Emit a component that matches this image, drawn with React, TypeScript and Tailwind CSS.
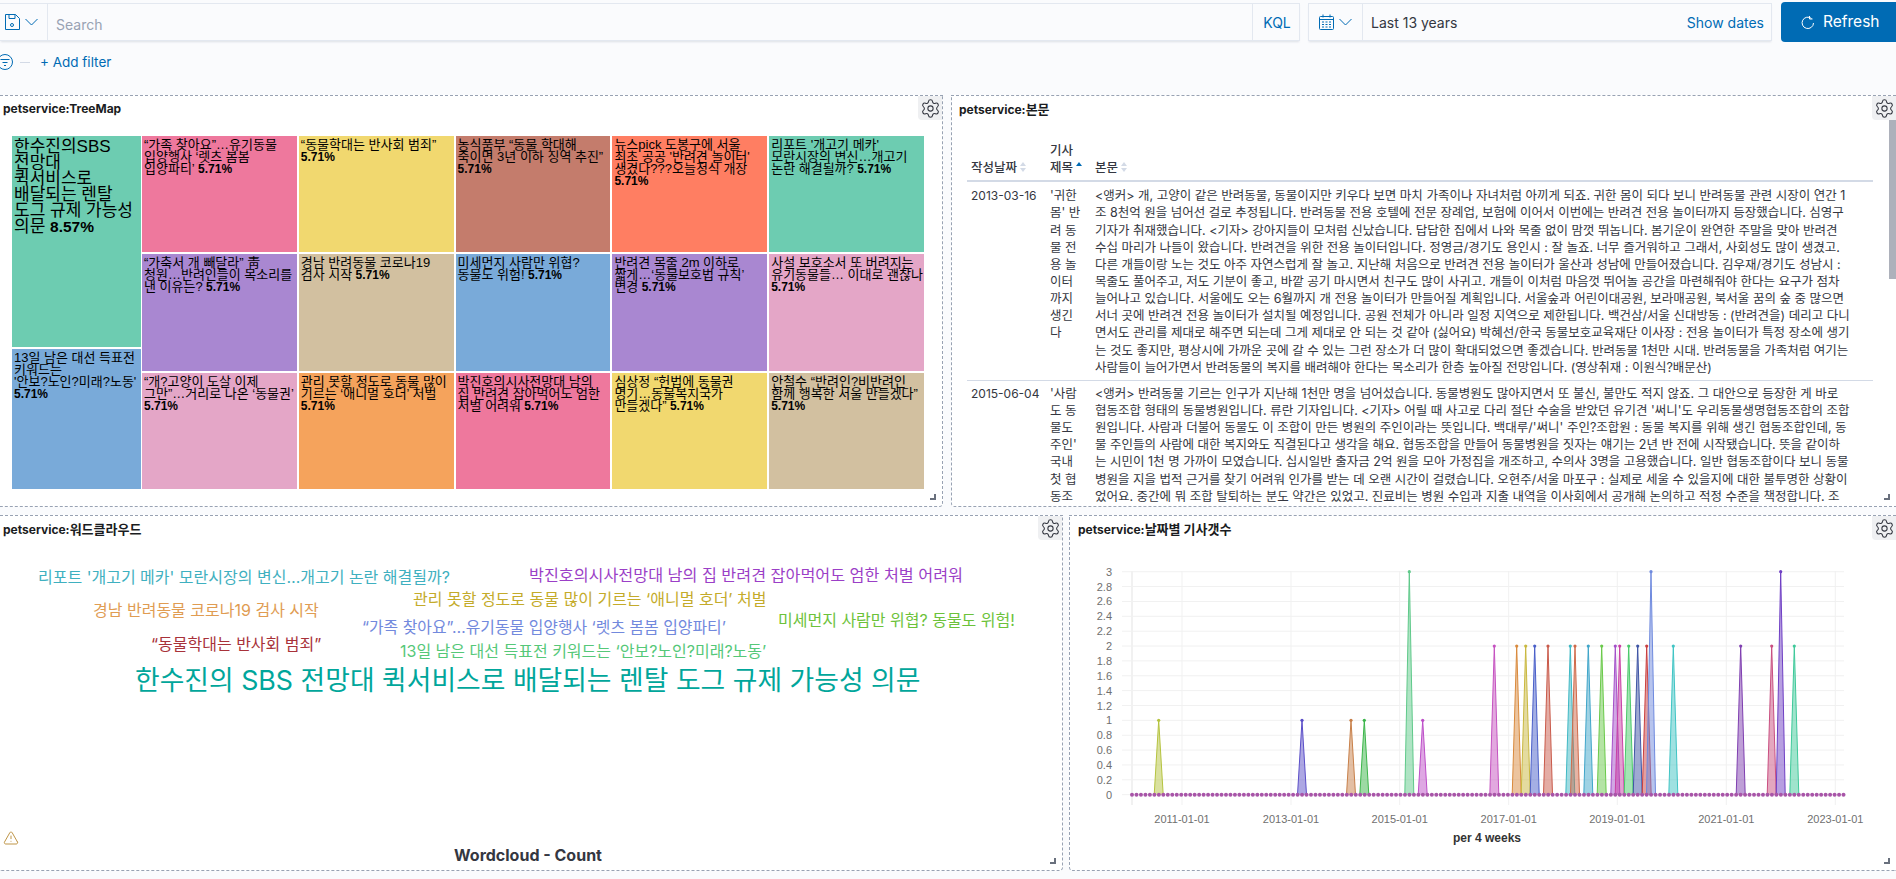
import { Settings, TriangleAlert } from "lucide-react";
import type { ReactNode } from "react";

const sans = "font-['Inter','Noto_Sans_CJK_KR',sans-serif]";

interface Cell {
  bg: string;
  lines: string[];
}

// an empty last line puts the percent on a line of its own
const cells: Cell[] = [
  { bg: "bg-[#EE789D]", lines: ["“가족 찾아요”…유기동물", "입양행사 ‘렛츠 봄봄", "입양파티’"] },
  { bg: "bg-[#F1D86F]", lines: ["“동물학대는 반사회 범죄”", ""] },
  { bg: "bg-[#C47C6C]", lines: ["농식품부 “동물 학대해", "죽이면 3년 이하 징역 추진”", ""] },
  { bg: "bg-[#FF7E62]", lines: ["뉴스pick 도봉구에 서울", "최초 공공 '반려견 놀이터'", "생겼다???오늘정식 개장", ""] },
  { bg: "bg-[#6DCCB1]", lines: ["리포트 '개고기 메카'", "모란시장의 변신…개고기", "논란 해결될까?"] },
  { bg: "bg-[#A987D1]", lines: ["“가축서 개 빼달라” 靑", "청원…반려인들이 목소리를", "낸 이유는?"] },
  { bg: "bg-[#D2C0A0]", lines: ["경남 반려동물 코로나19", "검사 시작"] },
  { bg: "bg-[#79AAD9]", lines: ["미세먼지 사람만 위협?", "동물도 위험!"] },
  { bg: "bg-[#A987D1]", lines: ["반려견 목줄 2m 이하로", "짧게…‘동물보호법 규칙’", "변경"] },
  { bg: "bg-[#E4A6C7]", lines: ["사설 보호소서 또 버려지는", "유기동물들… 이대로 괜찮나", ""] },
  { bg: "bg-[#E4A6C7]", lines: ["“개?고양이 도살 이제", "그만”…거리로 나온 ‘동물권’", ""] },
  { bg: "bg-[#F5A35C]", lines: ["관리 못할 정도로 동물 많이", "기르는 ‘애니멀 호더’ 처벌", ""] },
  { bg: "bg-[#EE789D]", lines: ["박진호의시사전망대 남의", "집 반려견 잡아먹어도 엄한", "처벌 어려워"] },
  { bg: "bg-[#F1D86F]", lines: ["심상정 “헌법에 동물권", "명기…동물복지국가", "만들겠다”"] },
  { bg: "bg-[#D2C0A0]", lines: ["안철수 “반려인?비반려인", "함께 행복한 서울 만들겠다”", ""] },
];

const row1Body = [
  "<앵커> 개, 고양이 같은 반려동물, 동물이지만 키우다 보면 마치 가족이나 자녀처럼 아끼게 되죠. 귀한 몸이 되다 보니 반려동물 관련 시장이 연간 1",
  "조 8천억 원을 넘어선 걸로 추정됩니다. 반려동물 전용 호텔에 전문 장례업, 보험에 이어서 이번에는 반려견 전용 놀이터까지 등장했습니다. 심영구",
  "기자가 취재했습니다. <기자> 강아지들이 모처럼 신났습니다. 답답한 집에서 나와 목줄 없이 맘껏 뛰놉니다. 봄기운이 완연한 주말을 맞아 반려견",
  "수십 마리가 나들이 왔습니다. 반려견을 위한 전용 놀이터입니다. 정영금/경기도 용인시 : 잘 놀죠. 너무 즐거워하고 그래서, 사회성도 많이 생겼고.",
  "다른 개들이랑 노는 것도 아주 자연스럽게 잘 놀고. 지난해 처음으로 반려견 전용 놀이터가 울산과 성남에 만들어졌습니다. 김우재/경기도 성남시 :",
  "목줄도 풀어주고, 저도 기분이 좋고, 바깥 공기 마시면서 친구도 많이 사귀고. 개들이 이처럼 마음껏 뛰어놀 공간을 마련해줘야 한다는 요구가 점차",
  "늘어나고 있습니다. 서울에도 오는 6월까지 개 전용 놀이터가 만들어질 계획입니다. 서울숲과 어린이대공원, 보라매공원, 북서울 꿈의 숲 중 많으면",
  "서너 곳에 반려견 전용 놀이터가 설치될 예정입니다. 공원 전체가 아니라 일정 지역으로 제한됩니다. 백건삼/서울 신대방동 : (반려견을) 데리고 다니",
  "면서도 관리를 제대로 해주면 되는데 그게 제대로 안 되는 것 같아 (싫어요) 박혜선/한국 동물보호교육재단 이사장 : 전용 놀이터가 특정 장소에 생기",
  "는 것도 좋지만, 평상시에 가까운 곳에 갈 수 있는 그런 장소가 더 많이 확대되었으면 좋겠습니다. 반려동물 1천만 시대. 반려동물을 가족처럼 여기는",
  "사람들이 늘어가면서 반려동물의 복지를 배려해야 한다는 목소리가 한층 높아질 전망입니다. (영상취재 : 이원식?배문산)",
];

const row2Body = [
  "<앵커> 반려동물 기르는 인구가 지난해 1천만 명을 넘어섰습니다. 동물병원도 많아지면서 또 불신, 불만도 적지 않죠. 그 대안으로 등장한 게 바로",
  "협동조합 형태의 동물병원입니다. 류란 기자입니다. <기자> 어릴 때 사고로 다리 절단 수술을 받았던 유기견 '써니'도 우리동물생명협동조합의 조합",
  "원입니다. 사람과 더불어 동물도 이 조합이 만든 병원의 주인이라는 뜻입니다. 백대루/'써니' 주인?조합원 : 동물 복지를 위해 생긴 협동조합인데, 동",
  "물 주인들의 사람에 대한 복지와도 직결된다고 생각을 해요. 협동조합을 만들어 동물병원을 짓자는 얘기는 2년 반 전에 시작됐습니다. 뜻을 같이하",
  "는 시민이 1천 명 가까이 모였습니다. 십시일반 출자금 2억 원을 모아 가정집을 개조하고, 수의사 3명을 고용했습니다. 일반 협동조합이다 보니 동물",
  "병원을 지을 법적 근거를 찾기 어려워 인가를 받는 데 오랜 시간이 걸렸습니다. 오현주/서울 마포구 : 실제로 세울 수 있을지에 대한 불투명한 상황이",
  "었어요. 중간에 뭐 조합 탈퇴하는 분도 약간은 있었고. 진료비는 병원 수입과 지출 내역을 이사회에서 공개해 논의하고 적정 수준을 책정합니다. 조",
];

const words = [
  { text: "리포트 '개고기 메카' 모란시장의 변신…개고기 논란 해결될까?", cls: "left-[38px] top-[51px] text-[16px] text-[#3fb0c0]" },
  { text: "박진호의시사전망대 남의 집 반려견 잡아먹어도 엄한 처벌 어려워", cls: "left-[529px] top-[49px] text-[16.2px] text-[#9b3fc7]" },
  { text: "관리 못할 정도로 동물 많이 기르는 ‘애니멀 호더’ 처벌", cls: "left-[413px] top-[73px] text-[16px] text-[#c4ab2a]" },
  { text: "경남 반려동물 코로나19 검사 시작", cls: "left-[93px] top-[84px] text-[16px] text-[#e09c52]" },
  { text: "미세먼지 사람만 위협? 동물도 위험!", cls: "left-[778px] top-[94px] text-[16px] text-[#6cc23a]" },
  { text: "“가족 찾아요”…유기동물 입양행사 ‘렛츠 봄봄 입양파티’", cls: "left-[362px] top-[102px] text-[15.9px] text-[#7289dd]" },
  { text: "“동물학대는 반사회 범죄”", cls: "left-[151px] top-[118px] text-[16px] text-[#a8323a]" },
  { text: "13일 남은 대선 득표전 키워드는 ‘안보?노인?미래?노동’", cls: "left-[400px] top-[125px] text-[16px] text-[#55c878]" },
  { text: "한수진의 SBS 전망대 퀵서비스로 배달되는 렌탈 도그 규제 가능성 의문", cls: "left-[135px] top-[154px] text-[26.8px] text-[#00a69b]" },
];

const peaks: [number, number, string][] = [
  [1158.7, 1, "#b5c33f"],
  [1302, 1, "#5b4fc8"],
  [1351, 1, "#c8804a"],
  [1364.3, 1, "#3cb54a"],
  [1409.3, 3, "#5fc98a"],
  [1422.7, 1, "#bd4fc8"],
  [1494.3, 2, "#c552c0"],
  [1516.7, 2, "#d98a3d"],
  [1525.7, 2, "#c9b83f"],
  [1534.7, 2, "#4a5fc9"],
  [1548, 2, "#c95a4a"],
  [1570.3, 2, "#3fb8c4"],
  [1575, 2, "#cf6a4a"],
  [1588.3, 2, "#3fa5c9"],
  [1601.7, 2, "#6ac94a"],
  [1615.3, 2, "#a44fc9"],
  [1619.7, 2, "#c93fa5"],
  [1628.7, 2, "#4ac96a"],
  [1637.7, 2, "#3f55a5"],
  [1646.7, 2, "#c93f3f"],
  [1651, 3, "#6f8ade"],
  [1673.3, 2, "#3fc4c4"],
  [1740.7, 2, "#7f3fb0"],
  [1771.7, 2, "#c94f80"],
  [1780.7, 3, "#6f3fc4"],
  [1794.3, 2, "#3fc99a"],
];

const yTicks = ["0", "0.2", "0.4", "0.6", "0.8", "1", "1.2", "1.4", "1.6", "1.8", "2", "2.2", "2.4", "2.6", "2.8", "3"];
const xTicks: [number, string][] = [
  [1182, "2011-01-01"],
  [1291, "2013-01-01"],
  [1399.7, "2015-01-01"],
  [1508.7, "2017-01-01"],
  [1617.3, "2019-01-01"],
  [1726.3, "2021-01-01"],
  [1835.3, "2023-01-01"],
];

const yZero = 793.7;
const yUnit = 74.33;

function Chart() {
  const dots: number[] = [];
  for (let x = 1132; x <= 1844; x += 4.475) dots.push(x);

  return (
    <svg viewBox="1070 537 826 325" width={826} height={325} className="block">
      {yTicks.map((t, i) => {
        const y = yZero - i * 0.2 * yUnit;
        return (
          <g key={t}>
            <line x1={1122} x2={1844} y1={y} y2={y} stroke="#f1f1f1" strokeWidth={1} />
            <text x={1112} y={y + 4} textAnchor="end" fontSize={11} fill="#6f6f6f" fontFamily="Liberation Sans">
              {t}
            </text>
          </g>
        );
      })}
      <line x1={1132} x2={1132} y1={570} y2={804} stroke="#f1f1f1" strokeWidth={2} />
      {xTicks.map(([x, label]) => (
        <g key={label}>
          <line x1={x} x2={x} y1={570} y2={804} stroke="#f1f1f1" strokeWidth={1} />
          <text x={x} y={822} textAnchor="middle" fontSize={11} fill="#6f6f6f" fontFamily="Liberation Sans">
            {label}
          </text>
        </g>
      ))}
      <text x={1487} y={841} textAnchor="middle" fontSize={12} fontWeight={700} fill="#333333" fontFamily="Liberation Sans">
        per 4 weeks
      </text>
      {peaks.map(([x, v, c]) => {
        const top = yZero - v * yUnit;
        return (
          <g key={x}>
            <polygon points={`${x - 4.5},${yZero} ${x},${top} ${x + 4.5},${yZero}`} fill={c} fillOpacity={0.5} />
            <polyline points={`${x - 4.5},${yZero} ${x},${top} ${x + 4.5},${yZero}`} fill="none" stroke={c} strokeWidth={1} />
            <circle cx={x} cy={top} r={1.6} fill={c} />
          </g>
        );
      })}
      {dots.map((x) => (
        <circle key={x} cx={x} cy={yZero} r={2} fill="#a855a8" />
      ))}
    </svg>
  );
}

function Chevron() {
  return (
    <svg width={13} height={8} viewBox="0 0 13 8" fill="none" stroke="currentColor" className="shrink-0">
      <path d="M.5 1l6 6 6-6" />
    </svg>
  );
}

function Panel({ className, title, children, titleCls }: {
  className: string;
  title: ReactNode;
  children: ReactNode;
  titleCls: string;
}) {
  return (
    <div className={`relative overflow-hidden border border-dashed border-[#98a2b3] bg-white ${className}`}>
      <div className={`pt-[5px] text-[12px] leading-4 font-bold text-[#1a1c21] ${titleCls}`}>
        petservice:{title}
      </div>
      {children}
      <div className="absolute top-0 right-0 flex h-[24px] w-[24px] items-center justify-center rounded-bl bg-[#eff0f2]">
        <Settings size={21} strokeWidth={1.2} className="text-[#343741]" />
      </div>
      <div className="absolute right-[6px] bottom-[6px] h-[6px] w-[6px] border-r-2 border-b-2 border-[#69707d]" />
    </div>
  );
}

function SortIcon({ active }: { active?: boolean }) {
  return (
    <svg width={8} height={12} viewBox="0 0 8 12" className="ml-[2px] inline-block align-[-1px]">
      <path d="M4 1 7 5H1z" fill={active ? "#006bb4" : "#d3dae6"} />
      {!active && <path d="M4 11 1 7h6z" fill="#d3dae6" />}
    </svg>
  );
}

function App() {
  return (
    <div className={`flex h-[879px] w-[1896px] flex-col overflow-hidden bg-[#fafbfd] pt-[2px] ${sans}`}>
      <div className="flex h-[40px] items-stretch text-[14px]">
        <div className="my-[1px] flex w-[1300px] items-stretch border border-l-0 border-[#e3e8f0] shadow-[0_2px_2px_-1px_rgba(152,162,179,0.3)]">
          <div className="flex w-[48px] items-center gap-[5px] border-r border-[#e3e8f0] pl-[5px] text-[#006bb4]">
            <svg width={15} height={16} viewBox="0 0 15 16" fill="none" stroke="currentColor" className="shrink-0">
              <path d="M.5.5h10l4 4v11H.5z" />
              <path d="M4 .5v4h6v-4" />
              <circle cx={7} cy={11} r={1.5} />
            </svg>
            <Chevron />
          </div>
          <div className="flex flex-1 items-center pt-[4px] pl-[8px] text-[#98a2b3]">Search</div>
          <div className="flex w-[47px] items-center justify-center border-l border-[#e3e8f0] pl-[2px] text-[#006bb4]">KQL</div>
        </div>
        <div className="my-[1px] ml-[8px] flex w-[464px] items-stretch border border-[#e3e8f0] shadow-[0_2px_2px_-1px_rgba(152,162,179,0.3)]">
          <div className="flex w-[54px] items-center gap-[5px] border-r border-[#e3e8f0] pl-[10px] text-[#006bb4]">
            <svg width={15} height={16} viewBox="0 0 15 16" fill="none" stroke="currentColor" className="shrink-0">
              <rect x={0.5} y={2.5} width={14} height={13} rx={1} />
              <path d="M.5 5.5h14M4 .5v3M11 .5v3" />
              <path d="M3 8h2M6.5 8h2M10 8h2M3 10.5h2M6.5 10.5h2M10 10.5h2M3 13h2M6.5 13h2M10 13h2" />
            </svg>
            <Chevron />
          </div>
          <div className="flex flex-1 items-center justify-between pr-[7px] pl-[8px]">
            <span className="text-[#343741]">Last 13 years</span>
            <span className="text-[#006bb4]">Show dates</span>
          </div>
        </div>
        <div className="ml-[9px] flex w-[115px] items-center gap-[9px] rounded-l bg-[#006bb4] pl-[20px] text-[15.5px] font-normal text-white">
          <svg width={13} height={15} viewBox="0 0 13 15" fill="none" stroke="currentColor">
            <path d="M10.5 3.5a5.7 5.7 0 1 0 2 4.5" />
            <path d="M8.5 1v3h3" />
          </svg>
          Refresh
        </div>
      </div>

      <div className="mt-[11px] flex h-[18px] items-center text-[#006bb4]">
        <svg width={16} height={16} viewBox="0 0 16 16" fill="none" stroke="currentColor" className="-ml-[3px] shrink-0">
          <circle cx={8} cy={8} r={7.5} />
          <path d="M3.5 5.5h9M5.5 8.5h5M7 11.5h2" />
        </svg>
        <div className="ml-[7px] h-px w-[10px] bg-[#d3dae6]" />
        <span className="ml-[10px] text-[13.5px]">+ Add filter</span>
      </div>

      <div className="mt-[24px] flex h-[412px] gap-[8px]">
        <Panel className="w-[943px] rounded-br border-l-0" title="TreeMap" titleCls="pl-[3px]">
          <div className="mt-[19px] ml-[12px] flex w-[912px] gap-[1px] font-['Liberation_Sans','Noto_Sans_CJK_KR',sans-serif] text-black">
            <div className="flex w-[129px] flex-col gap-[2px]">
              <div className="h-[211px] bg-[#6DCCB1] px-[2px] pt-[3px] text-[17px] leading-4">
                한수진의SBS<br />전망대<br />퀵서비스로<br />배달되는 렌탈<br />도그 규제 가능성<br />의문 <b className="text-[15.5px]">8.57%</b>
              </div>
              <div className="h-[140px] bg-[#79AAD9] px-[2px] pt-[3px] text-[13px] leading-3">
                13일 남은 대선 득표전<br />키워드는<br />'안보?노인?미래?노동'<br /><b className="text-[12px]">5.71%</b>
              </div>
            </div>
            <div className="grid h-[353px] w-[782px] grid-cols-5 grid-rows-3 gap-[2px]">
              {cells.map((c, i) => (
                <div key={i} className={`${c.bg} px-[2px] pt-[3px] text-[13px] leading-3 whitespace-nowrap`}>
                  {c.lines.map((l, j) => (
                    <div key={j} className="h-3">
                      {l}
                      {j === c.lines.length - 1 && <b className="text-[12px]">{l ? " " : ""}5.71%</b>}
                    </div>
                  ))}
                </div>
              ))}
            </div>
          </div>
        </Panel>

        <Panel className="flex-1 rounded-bl border-r-0" title={<span className="text-[13px]">본문</span>} titleCls="pl-[7px]">
          <table className="mt-[24px] ml-[15px] w-[906px] table-fixed border-collapse text-[12.5px] leading-[17.14px] text-[#343741]">
            <thead>
              <tr className="border-b-2 border-[#d3dae6]">
                <th className="w-[79px] px-1 pb-[4px] text-left align-bottom font-medium whitespace-nowrap">작성날짜<SortIcon /></th>
                <th className="w-[45px] px-1 pb-[4px] text-left align-bottom font-medium">기사<br />제목<SortIcon active /></th>
                <th className="px-1 pb-[4px] text-left align-bottom font-medium">본문<SortIcon /></th>
              </tr>
            </thead>
            <tbody>
              <tr className="border-b border-[#d3dae6]">
                <td className="px-1 pt-[5px] pb-[4px] align-top text-[12px] whitespace-nowrap">2013-03-16</td>
                <td className="px-1 pt-[5px] pb-[4px] align-top whitespace-nowrap">
                  {"'귀한,몸' 반,려 동,물 전,용 놀,이터,까지,생긴,다".split(",").map((l) => <div key={l}>{l}</div>)}
                </td>
                <td className="px-1 pt-[5px] pb-[4px] align-top whitespace-nowrap">
                  {row1Body.map((l) => <div key={l}>{l}</div>)}
                </td>
              </tr>
              <tr>
                <td className="px-1 pt-[4px] align-top text-[12px] whitespace-nowrap">2015-06-04</td>
                <td className="px-1 pt-[4px] align-top whitespace-nowrap">
                  {"'사람,도 동,물도,주인',국내,첫 협,동조".split(",").map((l) => <div key={l}>{l}</div>)}
                </td>
                <td className="px-1 pt-[4px] align-top whitespace-nowrap">
                  {row2Body.map((l) => <div key={l}>{l}</div>)}
                </td>
              </tr>
            </tbody>
          </table>
          <div className="absolute top-[24px] right-0 h-[159px] w-[7px] bg-[#adb1bb]" />
        </Panel>
      </div>

      <div className="mt-[8px] flex h-[356px] gap-[6px]">
        <Panel className="w-[1063px] rounded-br border-l-0" title={<span className="text-[13px]">워드클라우드</span>} titleCls="pl-[3px]">
          {words.map((w) => (
            <span key={w.text} className={`absolute leading-[20px] whitespace-nowrap ${w.cls}`}>
              {w.text}
            </span>
          ))}
          <TriangleAlert size={16} strokeWidth={1.3} className="absolute top-[314px] left-[3px] text-[#b4842a]" />
          <div className="absolute top-[331px] left-0 w-full pr-[6px] text-center text-[16px] leading-4 font-bold text-[#343741]">
            Wordcloud - Count
          </div>
        </Panel>
        <Panel className="flex-1 rounded-bl border-r-0" title={<span className="text-[13px]">날짜별 기사갯수</span>} titleCls="pl-[8px]">
          <Chart />
        </Panel>
      </div>
    </div>
  );
}

export default App;
